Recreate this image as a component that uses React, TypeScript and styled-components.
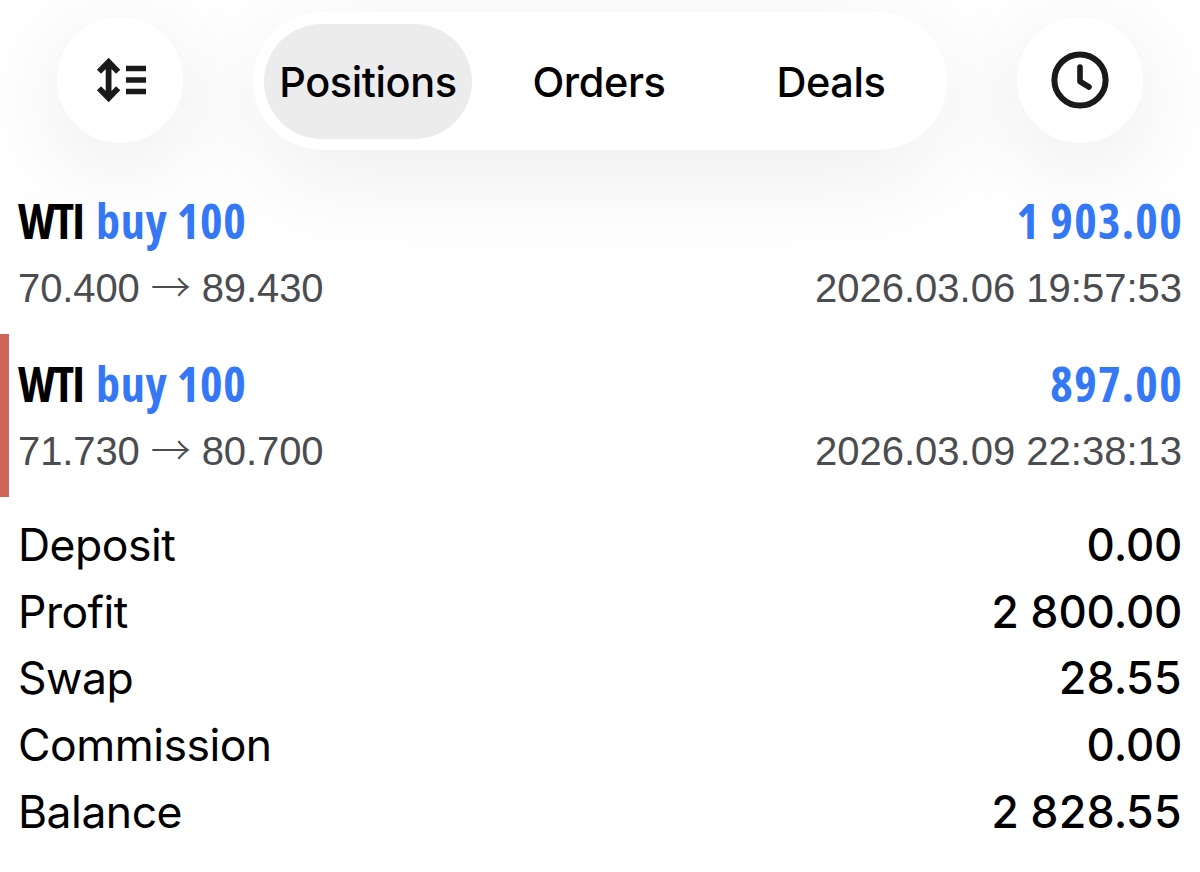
import React, { useState } from "react";
import styled, { createGlobalStyle } from "styled-components";

interface IPosition {
  id: number;
  symbol: string;
  action: string;
  open: string;
  close: string;
  profit: string;
  time: string;
  marked: boolean;
}

const tabs = ["Positions", "Orders", "Deals"];

const positions: IPosition[] = [
  {
    id: 1,
    symbol: "WTI",
    action: "buy 100",
    open: "70.400",
    close: "89.430",
    profit: "1 903.00",
    time: "2026.03.06 19:57:53",
    marked: false,
  },
  {
    id: 2,
    symbol: "WTI",
    action: "buy 100",
    open: "71.730",
    close: "80.700",
    profit: "897.00",
    time: "2026.03.09 22:38:13",
    marked: true,
  },
];

const totals = [
  { label: "Deposit", value: "0.00" },
  { label: "Profit", value: "2 800.00" },
  { label: "Swap", value: "28.55" },
  { label: "Commission", value: "0.00" },
  { label: "Balance", value: "2 828.55" },
];

const App: React.FC = () => {
  const [active, setActive] = useState("Positions");

  return (
    <>
      <GlobalStyle />
      <Page>
        <Header>
          <RoundButton aria-label="Sort">
            <svg width="52" height="46" viewBox="0 0 52 46" fill="none">
              <path
                d="M14.6 5v36M5 14.7l9.6-9.8 9.6 9.8M5 31.3l9.6 9.8 9.6-9.8"
                stroke="#1a1a1a"
                strokeWidth="5.8"
              />
              <path
                d="M32 11.5h20M32 23h20M32 34.5h20"
                stroke="#1a1a1a"
                strokeWidth="5.6"
              />
            </svg>
          </RoundButton>
          <Tabs>
            {tabs.map((tab) => (
              <Tab
                key={tab}
                $active={tab === active}
                onClick={() => setActive(tab)}
              >
                {tab}
              </Tab>
            ))}
          </Tabs>
          <RoundButton aria-label="History period">
            <svg width="58" height="58" viewBox="0 0 58 58" fill="none">
              <circle cx="29" cy="29" r="25.6" stroke="#1a1a1a" strokeWidth="6" />
              <path
                d="M29 16v14.5l9 5.5"
                stroke="#1a1a1a"
                strokeWidth="5.6"
                strokeLinecap="round"
                strokeLinejoin="round"
              />
            </svg>
          </RoundButton>
        </Header>

        {positions.map((item) => (
          <Position key={item.id} $marked={item.marked}>
            <Line>
              <Title>
                {item.symbol} <Action>{item.action}</Action>
              </Title>
              <Amount>{item.profit}</Amount>
            </Line>
            <Details>
              <Prices>
                {item.open} <Arrow>→</Arrow> {item.close}
              </Prices>
              <span>{item.time}</span>
            </Details>
          </Position>
        ))}

        <Summary>
          {totals.map((item) => (
            <SummaryRow key={item.label}>
              <Label>{item.label}</Label>
              <Value>{item.value}</Value>
            </SummaryRow>
          ))}
        </Summary>
      </Page>
    </>
  );
};

const GlobalStyle = createGlobalStyle`
  * {
    box-sizing: border-box;
    margin: 0;
    padding: 0;
  }

  body {
    background-color: #fff;
    font-family: Inter, sans-serif;
  }
`;

const Page = styled.main`
  width: 1200px;
  height: 872px;
  overflow: hidden;
  background-color: #fff;
`;

const Header = styled.header`
  height: 171px;
  padding: 12px 57px 0;
  display: flex;
  justify-content: space-between;
  align-items: flex-start;
`;

const RoundButton = styled.button`
  width: 126px;
  height: 126px;
  margin-top: 5px;
  border: none;
  border-radius: 50%;
  background-color: #fff;
  box-shadow: 0 20px 100px rgba(0, 0, 0, 0.09);
  display: flex;
  align-items: center;
  justify-content: center;
  cursor: pointer;
`;

const Tabs = styled.nav`
  width: 694px;
  height: 138px;
  border-radius: 69px;
  background-color: #fff;
  box-shadow: 0 24px 110px rgba(0, 0, 0, 0.075);
  display: grid;
  grid-template-columns: 230px 232px 232px;
  align-items: center;
  justify-items: center;
  position: relative;
`;

const Tab = styled.button<{ $active: boolean }>`
  width: 208px;
  height: 115px;
  padding-top: 2px;
  border: none;
  border-radius: 58px;
  background-color: ${(props) => (props.$active ? "#ececec" : "transparent")};
  font-family: inherit;
  font-size: 41.5px;
  font-weight: 450;
  letter-spacing: -0.4px;
  color: #000;
  cursor: pointer;
`;

const Position = styled.section<{ $marked: boolean }>`
  height: 163px;
  padding: 16px 18px 0 9px;
  border-left: 9px solid
    ${(props) => (props.$marked ? "#d0655a" : "transparent")};
  position: relative;
`;

const Line = styled.div`
  height: 68px;
  display: flex;
  justify-content: space-between;
  align-items: flex-start;
`;

const Title = styled.h2`
  font-family: "Open Sans", sans-serif;
  font-size: 48px;
  font-weight: 700;
  font-stretch: 75%;
  line-height: 67px;
  letter-spacing: -1.8px;
  white-space: nowrap;
  color: #000;
`;

const Action = styled.span`
  margin-left: 6px;
  letter-spacing: 0.7px;
  color: #3478f6;
`;

const Amount = styled.p`
  font-family: "Open Sans", sans-serif;
  font-size: 48px;
  font-weight: 700;
  font-stretch: 75%;
  line-height: 67px;
  letter-spacing: 1.3px;
  margin-right: -1px;
  white-space: nowrap;
  color: #3478f6;
`;

const Details = styled.div`
  display: flex;
  justify-content: space-between;
  font-family: "Liberation Sans", sans-serif;
  font-size: 40px;
  line-height: 66px;
  color: #4b4c50;
`;

const Prices = styled.span`
  letter-spacing: -0.1px;
`;

const Arrow = styled.span`
  font-family: "Noto Sans CJK SC", sans-serif;
  font-weight: 300;
  line-height: 1;
`;

const Summary = styled.section`
  padding: 15px 18px 0;
`;

const SummaryRow = styled.div`
  height: 66.6px;
  display: flex;
  justify-content: space-between;
  align-items: center;
  font-size: 44.5px;
  color: #000;
`;

const Label = styled.span`
  font-weight: 400;
  letter-spacing: -0.5px;
`;

const Value = styled.span`
  font-weight: 500;
  font-variant-numeric: tabular-nums;
  letter-spacing: -0.7px;
`;

export default App;
